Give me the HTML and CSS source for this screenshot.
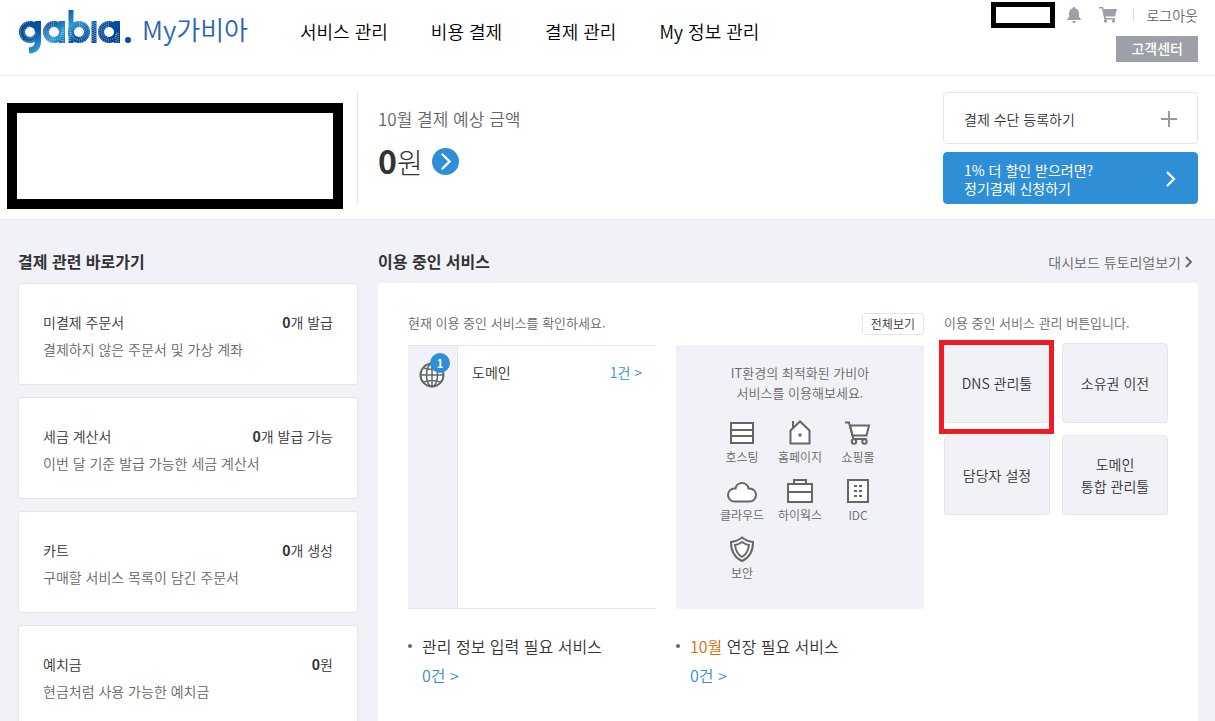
FILE: index.html
```html
<!DOCTYPE html>
<html lang="ko">
<head>
    <meta charset="UTF-8">
    <meta name="viewport" content="width=device-width, initial-scale=1.0">
    <title>My가비아</title>
    <link rel="stylesheet" href="styles.css">
</head>
<body>

    <header class="header">
        <a class="brand" href="#">
            <svg class="logo" width="114" height="46" viewBox="0 0 114 46" role="img" aria-label="gabia">
                <defs>
                    <linearGradient id="blue" gradientUnits="userSpaceOnUse" x1="0" y1="10" x2="22" y2="40" spreadMethod="reflect">
                        <stop offset="0" stop-color="#06408f"/>
                        <stop offset="0.6" stop-color="#0a55a4"/>
                        <stop offset="1" stop-color="#2f9bd6"/>
                    </linearGradient>
                </defs>
                <g fill="none" stroke="url(#blue)" stroke-width="6">
                    <circle cx="12" cy="24" r="8"/>
                    <path d="M20 13v20q0 9-9 9.500"/>
                    <circle cx="36" cy="24" r="8"/>
                    <path d="M44 13v22"/>
                    <circle cx="61" cy="24" r="8"/>
                    <path d="M53 2v33" stroke-width="5"/>
                    <path d="M76 13v22" stroke-width="5"/>
                    <circle cx="91" cy="24" r="8"/>
                    <path d="M99 13v22"/>
                </g>
                <g fill="none" stroke="#fff" stroke-dasharray="1 1" opacity="0.6">
                    <path d="M12 14a10 10 0 0 0-7 17M12 18a6 6 0 0 0 0 12a6 6 0 0 0 6-6M6 32a10 10 0 0 0 11 0"/>
                    <path d="M36 14a10 10 0 0 0 0 20M36 16a8 8 0 0 0 0 16a8 8 0 0 0 8-8M36 18a6 6 0 0 0 0 12M42 31l3 3M45 20v15"/>
                    <path d="M61 14a10 10 0 0 1 0 20M61 16a8 8 0 0 1 0 16a8 8 0 0 1-8-8M61 18a6 6 0 0 1 0 12M52 22v12"/>
                    <path d="M75 14v20M77 15v20"/>
                    <path d="M91 14a10 10 0 0 0 0 20M91 16a8 8 0 0 0 0 16a8 8 0 0 0 8-8M91 18a6 6 0 0 0 0 12M98 26v9M100 25v9"/>
                </g>
                <circle cx="110" cy="32" r="3" fill="#0a4a9c"/>
            </svg>
            <span>My가비아</span>
        </a>
        <nav class="nav">
            <a href="#">서비스 관리</a>
            <a href="#">비용 결제</a>
            <a href="#">결제 관리</a>
            <a href="#">My 정보 관리</a>
        </nav>
        <div class="util">
            <div class="util-row">
                <span class="mask mask-small"></span>
                <a href="#" aria-label="알림">
                    <svg width="14" height="16" viewBox="0 0 14 16" fill="#9da0a8"><path d="M7 0q1.300 0 1.300 1.300Q12 2.500 12 7v3l2 2.500v.500H0v-.500L2 10V7q0-4.500 3.700-5.700Q5.700 0 7 0zM5 14h4q-.500 2-2 2t-2-2z"/></svg>
                </a>
                <a class="cart" href="#" aria-label="장바구니">
                    <svg width="18" height="16" viewBox="0 0 18 16" fill="#9da0a8"><path d="M0 0h4l.700 2H18l-2 7.500H6.500l.300 1.500H16v1.500H5.300L3 1.500H0z"/><circle cx="6.500" cy="14" r="1.700"/><circle cx="14.500" cy="14" r="1.700"/></svg>
                </a>
                <a class="logout" href="#">로그아웃</a>
            </div>
            <a class="support" href="#">고객센터</a>
        </div>
    </header>

    <section class="summary">
        <div class="mask mask-large"></div>
        <div class="bill">
            <p>10월 결제 예상 금액</p>
            <a class="amount" href="#" aria-label="결제 예상 금액 보기">
                <span><strong>0</strong>원</span>
                <svg width="27" height="27" viewBox="0 0 27 27"><circle cx="13.500" cy="13.500" r="13.500" fill="#2f8fd6"/><path d="M10.500 6.500l7 7-7 7" fill="none" stroke="#fff" stroke-width="2.400" stroke-linecap="round"/></svg>
            </a>
        </div>
        <div class="actions">
            <button class="action">
                <span>결제 수단 등록하기</span>
                <svg width="16" height="16" viewBox="0 0 16 16" stroke="#999" stroke-width="2"><path d="M8 0v16M0 8h16"/></svg>
            </button>
            <button class="action action-blue">
                <span>1% 더 할인 받으려면?<br>정기결제 신청하기</span>
                <svg width="12" height="16" viewBox="0 0 12 16" fill="none" stroke="#fff" stroke-width="2.200"><path d="M2 1l7 7-7 7"/></svg>
            </button>
        </div>
    </section>

    <main class="content">
        <aside class="shortcuts">
            <h2>결제 관련 바로가기</h2>
            <a class="card" href="#">
                <span class="card-top"><span>미결제 주문서</span><span><b>0</b>개 발급</span></span>
                <span class="card-desc">결제하지 않은 주문서 및 가상 계좌</span>
            </a>
            <a class="card" href="#">
                <span class="card-top"><span>세금 계산서</span><span><b>0</b>개 발급 가능</span></span>
                <span class="card-desc">이번 달 기준 발급 가능한 세금 계산서</span>
            </a>
            <a class="card" href="#">
                <span class="card-top"><span>카트</span><span><b>0</b>개 생성</span></span>
                <span class="card-desc">구매할 서비스 목록이 담긴 주문서</span>
            </a>
            <a class="card" href="#">
                <span class="card-top"><span>예치금</span><span><b>0</b>원</span></span>
                <span class="card-desc">현금처럼 사용 가능한 예치금</span>
            </a>
        </aside>

        <section class="services">
            <div class="services-head">
                <h2>이용 중인 서비스</h2>
                <a href="#">대시보드 튜토리얼보기
                    <svg width="8" height="12" viewBox="0 0 8 12" fill="none" stroke="#666" stroke-width="1.800"><path d="M1 1l5 5-5 5"/></svg>
                </a>
            </div>
            <div class="panel">
                <div class="using">
                    <div class="panel-top">
                        <p>현재 이용 중인 서비스를 확인하세요.</p>
                        <button class="view-all">전체보기</button>
                    </div>
                    <div class="domain">
                        <div class="domain-icon">
                            <svg width="26" height="26" viewBox="0 0 26 26" fill="none" stroke="#666" stroke-width="2"><circle cx="13" cy="13" r="11.500" fill="#fff"/><ellipse cx="13" cy="13" rx="5.500" ry="11.500" stroke-width="1.600"/><path d="M13 1v24M1 13h24M5 6q8 3 16 0M5 20q8-3 16 0" stroke-width="1.500"/></svg>
                            <span class="badge">1</span>
                        </div>
                        <div class="domain-row">
                            <span>도메인</span>
                            <a href="#">1건 &gt;</a>
                        </div>
                    </div>
                    <div class="promo">
                        <p>IT환경의 최적화된 가비아<br>서비스를 이용해보세요.</p>
                        <div class="promo-grid">
                            <a href="#">
                                <svg width="30" height="26" viewBox="0 0 30 26"><path d="M4 3h22v20H4zM4 10h22M4 16h22"/></svg>
                                호스팅
                            </a>
                            <a href="#">
                                <svg width="30" height="26" viewBox="0 0 30 26"><path d="M5.500 23.500v-13l9.500-9 9.500 9v13z"/><path d="M8 8V1"/><path class="solid" d="M13.500 13.500h3v3h-3z"/></svg>
                                홈페이지
                            </a>
                            <a href="#">
                                <svg width="30" height="26" viewBox="0 0 30 26"><path d="M7 5.500h19l-2.500 10H9.500z"/><path class="line" d="M2 2.500h4l4.500 16.500h13"/><circle cx="11" cy="21.500" r="2.200"/><circle cx="21.500" cy="21.500" r="2.200"/></svg>
                                쇼핑몰
                            </a>
                            <a href="#">
                                <svg width="30" height="26" viewBox="0 0 30 26"><path d="M7.500 23.500a6.500 6.500 0 0 1 0-13h1a6.600 6.600 0 0 1 13 0h1a6.500 6.500 0 0 1 0 13z"/></svg>
                                클라우드
                            </a>
                            <a href="#">
                                <svg width="30" height="26" viewBox="0 0 30 26"><path d="M3 6h24v18H3zM3 14h24M9 6V2h12v4"/></svg>
                                하이웍스
                            </a>
                            <a href="#">
                                <svg width="30" height="26" viewBox="0 0 30 26"><path d="M5 2h20v22H5z"/><path class="solid" d="M11 7h3v2h-3zM16 7h3v2h-3zM11 12h3v2h-3zM16 12h3v2h-3zM11 17h3v2h-3zM16 17h3v2h-3z"/></svg>
                                IDC
                            </a>
                            <a href="#">
                                <svg width="30" height="26" viewBox="0 0 30 26"><path d="M15 1.500q5 4 11 4.500 0 14-11 19Q4 20 4 6q6-.500 11-4.500z"/><path d="M15 6q3.500 2.500 7 3-1 8.500-7 12-6-3.500-7-12 3.500-.500 7-3z"/></svg>
                                보안
                            </a>
                        </div>
                    </div>
                    <div class="todo">
                        <p>관리 정보 입력 필요 서비스</p>
                        <a href="#">0건 &gt;</a>
                    </div>
                    <div class="todo">
                        <p><em>10월</em> 연장 필요 서비스</p>
                        <a href="#">0건 &gt;</a>
                    </div>
                </div>
                <div class="manage">
                    <p>이용 중인 서비스 관리 버튼입니다.</p>
                    <div class="manage-grid">
                        <button class="marked">DNS 관리툴</button>
                        <button>소유권 이전</button>
                        <button>담당자 설정</button>
                        <button>도메인<br>통합 관리툴</button>
                    </div>
                </div>
            </div>
        </section>
    </main>

</body>
</html>
```
FILE: styles.css
```css
* {
    box-sizing: border-box;
}
body {
    margin: 0;
    background: #f1f2f8;
    color: #333;
    font-family: "Noto Sans CJK KR", sans-serif;
    font-size: 14px;
    font-weight: 350;
    line-height: 20px;
}
a {
    color: inherit;
    text-decoration: none;
}
p, h2 {
    margin: 0;
}
button {
    font: inherit;
    color: inherit;
    cursor: pointer;
}
svg {
    flex: none;
}

/* Header */
.header {
    display: flex;
    height: 76px;
    padding: 0 17px 0 18px;
    background: #fff;
    border-bottom: 1px solid #ebebeb;
}
.brand {
    display: flex;
    align-items: flex-start;
    gap: 10px;
    padding-top: 8px;
    color: #2a66ae;
    font-size: 26px;
    line-height: 42px;
}
.nav {
    display: flex;
    gap: 43px;
    margin-left: 52px;
    color: #000;
    font-size: 18px;
    line-height: 62px;
}
.util {
    display: flex;
    flex-direction: column;
    align-items: flex-end;
    gap: 8px;
    margin-left: auto;
    padding-top: 2px;
    color: #666;
}
.util-row {
    display: flex;
    align-items: center;
    gap: 12px;
    height: 26px;
}
.util-row svg {
    display: block;
}
.cart {
    margin-left: 6px;
}
.logout {
    margin-left: 4px;
    padding-left: 13px;
    background: linear-gradient(#ddd, #ddd) left center / 1px 12px no-repeat;
}
.support {
    height: 26px;
    padding: 0 15px;
    background: #9da0a8;
    color: #fff;
    font-weight: 500;
    line-height: 24px;
}
.mask {
    background: #fff;
    border: 5px solid #000;
}
.mask-small {
    width: 64px;
    height: 26px;
}

/* Summary */
.summary {
    display: flex;
    gap: 14px;
    padding: 16px 17px 10px 7px;
    background: #fff;
    border-bottom: 1px solid #ebebef;
}
.mask-large {
    width: 336px;
    height: 106px;
    margin-top: 11px;
    border-width: 10px;
}
.bill {
    flex: 1;
    height: 111px;
    padding: 15px 20px;
    border-left: 1px solid #e5e5e5;
    color: #666;
    font-size: 17px;
    line-height: 24px;
}
.amount {
    display: flex;
    align-items: center;
    gap: 9px;
    margin-top: 9px;
    color: #333;
    font-size: 28px;
    font-weight: 300;
    line-height: 40px;
}
.amount strong {
    font-size: 32px;
    font-weight: 700;
}
.actions {
    display: flex;
    flex-direction: column;
    gap: 8px;
    width: 255px;
}
.action {
    display: flex;
    align-items: center;
    justify-content: space-between;
    height: 52px;
    padding: 2px 20px 0;
    background: #fff;
    border: 1px solid #e5e5e5;
    border-radius: 4px;
    line-height: 18px;
    text-align: left;
}
.action-blue {
    background: #2f8fd6;
    border-color: #2f8fd6;
    color: #fff;
    font-weight: 400;
}

/* Content */
.content {
    display: flex;
    gap: 20px;
    padding: 29px 17px 40px 18px;
}
h2 {
    font-size: 16px;
    font-weight: 700;
    line-height: 24px;
}
.shortcuts {
    width: 340px;
}
.shortcuts h2 {
    margin-bottom: 10px;
}
.card {
    display: block;
    margin-bottom: 12px;
    padding: 25px 24px 21px;
    background: #fff;
    border: 1px solid #e5e6ec;
    border-radius: 4px;
    line-height: 27px;
}
.card-top {
    display: flex;
    justify-content: space-between;
}
.card-desc {
    display: block;
    color: #666;
}
.services {
    flex: 1;
}
.services-head {
    display: flex;
    align-items: center;
    justify-content: space-between;
    margin-bottom: 10px;
    padding-right: 5px;
}
.services-head a {
    display: flex;
    align-items: center;
    gap: 4px;
    padding-top: 2px;
    color: #666;
}
.panel {
    display: flex;
    gap: 20px;
    min-height: 480px;
    padding: 29px 30px;
    background: #fff;
    border-radius: 4px;
    color: #666;
    font-size: 13px;
}
.using {
    display: grid;
    flex: 516;
    grid-template-columns: 1fr 1fr;
    align-content: start;
    column-gap: 20px;
}
.panel-top {
    display: flex;
    grid-column: span 2;
    justify-content: space-between;
    margin-bottom: 9px;
    line-height: 22px;
}
.view-all {
    height: 22px;
    margin: 1px 0;
    padding: 0 8px;
    background: #fff;
    border: 1px solid #e5e5e5;
    border-radius: 3px;
    color: #333;
    font-size: 12px;
    line-height: 18px;
}
.domain {
    display: flex;
    border: 1px solid #e5e6ea;
    border-width: 1px 0;
    font-size: 14px;
}
.domain-icon {
    position: relative;
    width: 50px;
    padding: 16px 11px;
    background: #f1f2f8;
    border-right: 1px solid #e5e6ea;
}
.badge {
    position: absolute;
    top: 7px;
    left: 22px;
    width: 20px;
    height: 20px;
    background: #2f8fd6;
    border-radius: 10px;
    color: #fff;
    font-size: 11px;
    font-weight: 700;
    text-align: center;
}
.domain-row {
    display: flex;
    flex: 1;
    justify-content: space-between;
    padding: 16px 14px;
    color: #333;
}
.domain-row a, .todo a {
    color: #2f8fd6;
}
.promo {
    height: 264px;
    padding: 18px 37px;
    background: #f1f2f8;
    text-align: center;
}
.promo-grid {
    display: grid;
    grid-template-columns: repeat(3, 1fr);
    row-gap: 10px;
    margin-top: 17px;
    font-size: 12px;
    line-height: 22px;
    white-space: nowrap;
}
.promo-grid svg {
    display: block;
    margin: 0 auto;
    fill: #fff;
    stroke: #666;
    stroke-width: 2;
}
.promo-grid .solid {
    fill: #666;
    stroke: none;
}
.promo-grid .line {
    fill: none;
}
.todo {
    padding: 23px 14px;
    font-size: 16px;
    line-height: 29px;
}
.todo p {
    position: relative;
    color: #333;
}
.todo p::before {
    content: "";
    position: absolute;
    top: 12px;
    left: -14px;
    width: 4px;
    height: 4px;
    background: #666;
    border-radius: 2px;
}
.todo em {
    color: #dd6b00;
    font-style: normal;
}
.manage {
    flex: 224;
}
.manage > p {
    line-height: 22px;
}
.manage-grid {
    display: grid;
    grid-template-columns: 1fr 1fr;
    gap: 12px;
    margin-top: 9px;
}
.manage-grid button {
    position: relative;
    height: 80px;
    padding: 0;
    background: #f1f2f8;
    border: 1px solid #e5e6ea;
    border-radius: 4px;
    color: #333;
    font-size: 14px;
    line-height: 22px;
}
.marked::after {
    content: "";
    position: absolute;
    top: -4px;
    right: -5px;
    bottom: -12px;
    left: -6px;
    border: 5px solid #ed1c24;
}
```
